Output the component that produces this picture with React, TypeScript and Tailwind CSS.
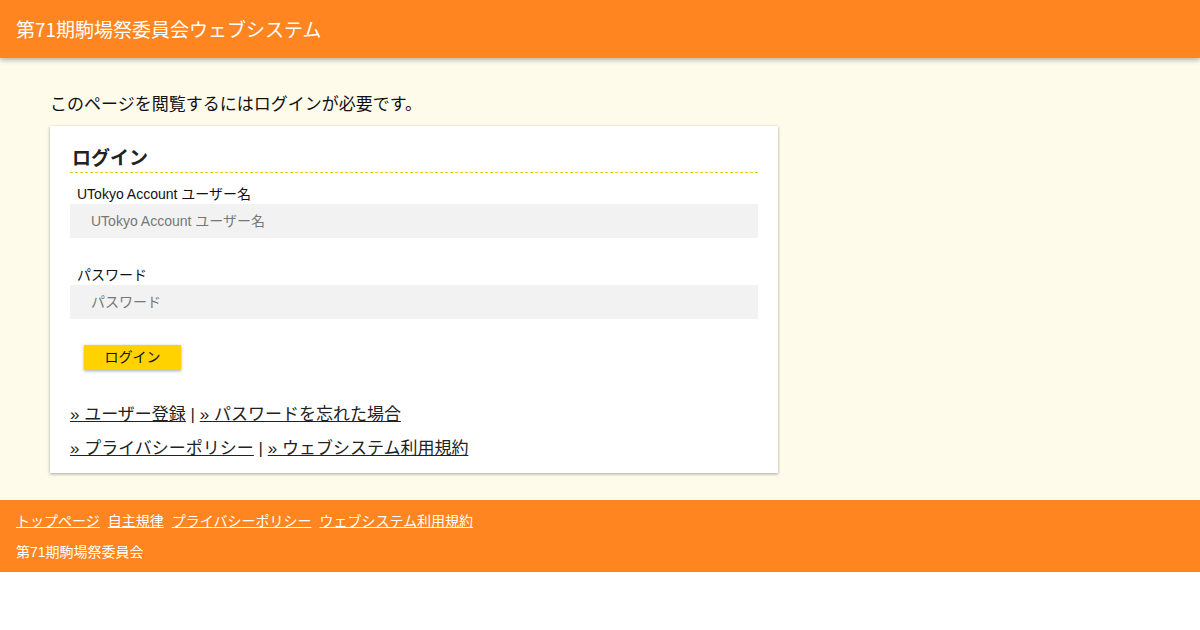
import React from "react";

const font = { fontFamily: '"Liberation Sans", "Noto Sans CJK JP", sans-serif' };

export default function App() {
  return (
    <div className="min-h-[630px] bg-white text-[#111]" style={font}>
      <header className="relative z-10 h-[58px] bg-[#ff8520] flex items-center px-4 shadow-[0_2px_5px_rgba(0,0,0,0.3)]">
        <h1 className="text-[19px] text-white leading-[28px]" style={{ fontFamily: '"Noto Sans CJK JP", sans-serif', fontWeight: 400 }}>
          第71期駒場祭委員会ウェブシステム
        </h1>
      </header>
      <main className="bg-[#fffbeb] pt-[33px] pb-[27px] px-[50px]">
        <p className="text-[17px] leading-[27px]">このページを閲覧するにはログインが必要です。</p>
        <div className="mt-[8px] w-[728px] bg-white px-[20px] pt-[20px] pb-[7px] shadow-[0_1px_3px_rgba(0,0,0,0.35)]">
          <h2 className="text-[19px] font-bold leading-[26px] pl-[2px] border-b border-dashed border-[#e3cf1a] text-[#222]">
            ログイン
          </h2>
          <label className="block mt-[12px] pl-[7px] text-[14px] leading-[19px]">UTokyo Account ユーザー名</label>
          <input
            className="block w-full h-[34px] bg-[#f2f2f2] px-[21px] text-[14px] outline-none placeholder:text-[#777]"
            placeholder="UTokyo Account ユーザー名"
          />
          <label className="block mt-[28px] pl-[7px] text-[14px] leading-[19px]">パスワード</label>
          <input
            type="password"
            className="block w-full h-[34px] bg-[#f2f2f2] px-[21px] text-[14px] outline-none placeholder:text-[#777]"
            placeholder="パスワード"
          />
          <button className="block mt-[26px] ml-[14px] w-[97px] h-[25px] bg-[#ffd200] text-[14px] leading-[25px] shadow-[0_1px_3px_rgba(0,0,0,0.35)]">
            ログイン
          </button>
          <div className="mt-[28px] text-[17px] leading-[34px] text-[#222]">
            <div>
              <a className="underline">» ユーザー登録</a> | <a className="underline">» パスワードを忘れた場合</a>
            </div>
            <div>
              <a className="underline">» プライバシーポリシー</a> | <a className="underline">» ウェブシステム利用規約</a>
            </div>
          </div>
        </div>
      </main>
      <footer className="bg-[#ff8520] px-4 pt-[12px] pb-[11px] text-white text-[14px]">
        <div className="flex gap-[8px] leading-[18px]">
          <a className="underline">トップページ</a>
          <a className="underline">自主規律</a>
          <a className="underline">プライバシーポリシー</a>
          <a className="underline">ウェブシステム利用規約</a>
        </div>
        <div className="mt-[13px] leading-[18px]">第71期駒場祭委員会</div>
      </footer>
    </div>
  );
}
